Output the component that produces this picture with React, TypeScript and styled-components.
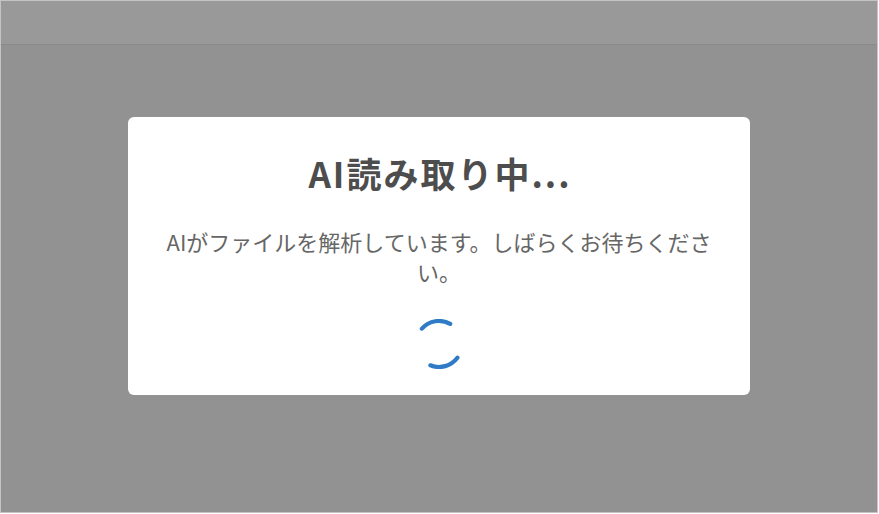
import React from "react";
import styled, { createGlobalStyle } from "styled-components";

const GlobalStyle = createGlobalStyle`
  html, body { margin: 0; padding: 0; background: #ffffff; }
  body { font-family: "Noto Sans CJK JP", "Noto Sans", sans-serif; }
  * { box-sizing: border-box; }
`;

const Frame = styled.div`
  position: relative;
  width: 878px;
  height: 513px;
  border: 1px solid #c4c4c4;
  overflow: hidden;
  display: flex;
  flex-direction: column;
  background: #f4f4f4;
`;

const Header = styled.header`
  height: 44px;
  flex: none;
  background: #ffffff;
  border-bottom: 1px solid #e8e8e8;
`;

const Body = styled.main`
  flex: 1;
  background: #f4f4f4;
`;

const Overlay = styled.div`
  position: absolute;
  inset: 0;
  background: rgba(0, 0, 0, 0.4);
  display: flex;
  align-items: center;
  justify-content: center;
`;

const Modal = styled.div`
  width: 622px;
  height: 278px;
  background: #ffffff;
  border-radius: 6px;
  padding: 35px 32px 0;
  display: flex;
  flex-direction: column;
  align-items: center;
  text-align: center;
  margin-top: -1px;
`;

const Title = styled.h2`
  margin: 0;
  font-size: 35px;
  line-height: 42px;
  font-weight: 700;
  color: #4d4d4d;
  letter-spacing: 2px;
  text-indent: 2px;
`;

const Message = styled.p`
  margin: 32px 0 0;
  font-size: 22px;
  line-height: 30px;
  font-weight: 400;
  color: #666666;
  width: 100%;
  line-break: strict;
`;

const SpinnerWrap = styled.div`
  margin-top: 33px;
  width: 50px;
  height: 50px;
`;

const Spinner = () => (
  <SpinnerWrap>
    <svg width="50" height="50" viewBox="0 0 50 50">
      <g fill="none" stroke="#2f7bc6" strokeWidth="4.2" strokeLinecap="round">
        <path d="M7.9 9.6 A23 23 0 0 1 36.2 4.9" />
        <path d="M43.4 38.8 A23 23 0 0 1 16.4 46.3" />
      </g>
    </svg>
  </SpinnerWrap>
);

export default function App() {
  return (
    <>
      <GlobalStyle />
      <Frame>
        <Header />
        <Body />
        <Overlay>
          <Modal>
            <Title>AI読み取り中...</Title>
            <Message>AIがファイルを解析しています。しばらくお待ちください。</Message>
            <Spinner />
          </Modal>
        </Overlay>
      </Frame>
    </>
  );
}
